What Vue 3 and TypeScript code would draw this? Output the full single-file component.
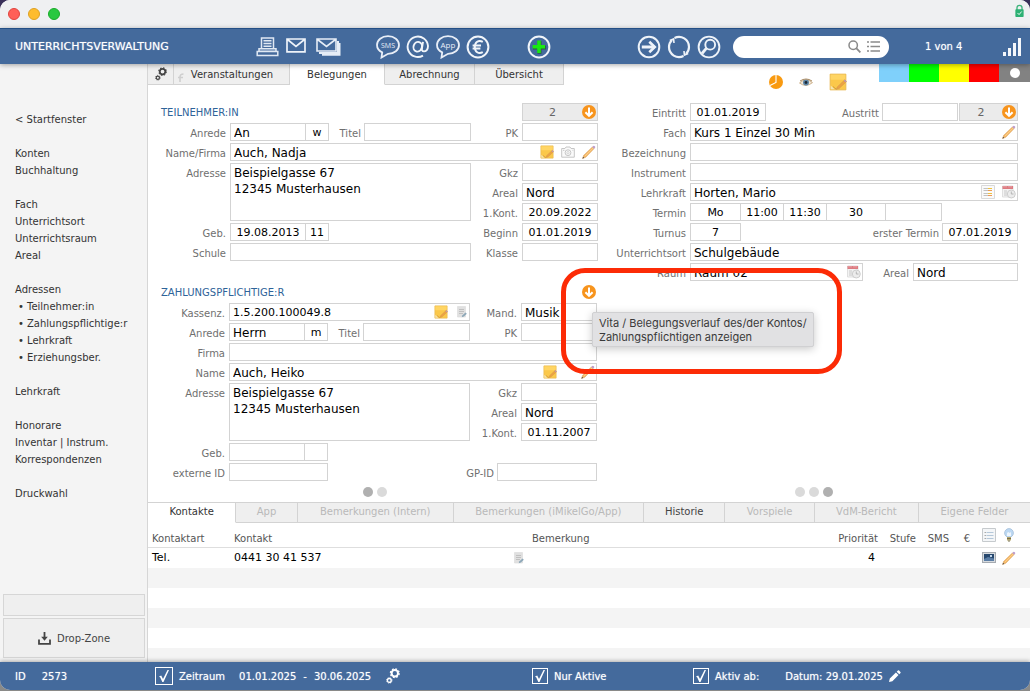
<script setup lang="ts">
import { reactive, ref } from 'vue'

interface NavItem { text: string; sub?: boolean }

const nav: NavItem[][] = [
  [{ text: '< Startfenster' }],
  [{ text: 'Konten' }, { text: 'Buchhaltung' }],
  [{ text: 'Fach' }, { text: 'Unterrichtsort' }, { text: 'Unterrichtsraum' }, { text: 'Areal' }],
  [
    { text: 'Adressen' },
    { text: 'Teilnehmer:in', sub: true },
    { text: 'Zahlungspflichtige:r', sub: true },
    { text: 'Lehrkraft', sub: true },
    { text: 'Erziehungsber.', sub: true },
  ],
  [{ text: 'Lehrkraft' }],
  [{ text: 'Honorare' }, { text: 'Inventar | Instrum.' }, { text: 'Korrespondenzen' }],
  [{ text: 'Druckwahl' }],
]

const detailTabs = [
  { text: 'Kontakte', cls: 'w-kontakte', state: 'active' },
  { text: 'App', cls: 'w-app', state: 'off' },
  { text: 'Bemerkungen (Intern)', cls: 'w-intern', state: 'off' },
  { text: 'Bemerkungen (iMikelGo/App)', cls: 'w-go', state: 'off' },
  { text: 'Historie', cls: 'w-historie', state: 'on' },
  { text: 'Vorspiele', cls: 'w-vorspiele', state: 'off' },
  { text: 'VdM-Bericht', cls: 'w-vdm', state: 'off' },
  { text: 'Eigene Felder', cls: 'w-eigene', state: 'off' },
]

const student = reactive({
  anrede: 'An', sex: 'w', titel: '', pk: '', name: 'Auch, Nadja',
  adresse: 'Beispielgasse 67\n12345 Musterhausen', gkz: '', areal: 'Nord',
  kont: '20.09.2022', geb: '19.08.2013', alter: '11', beginn: '01.01.2019', schule: '', klasse: '',
})
const payer = reactive({
  kassenz: '1.5.200.100049.8', mand: 'Musik', anrede: 'Herrn', sex: 'm', titel: '', pk: '',
  firma: '', name: 'Auch, Heiko', adresse: 'Beispielgasse 67\n12345 Musterhausen', gkz: '',
  areal: 'Nord', kont: '01.11.2007', geb: '', alter: '', extern: '', gp: '',
})
const course = reactive({
  eintritt: '01.01.2019', austritt: '', fach: 'Kurs 1 Einzel 30 Min', bezeichnung: '', instrument: '',
  lehrkraft: 'Horten, Mario', tag: 'Mo', von: '11:00', bis: '11:30', dauer: '30', extra: '',
  turnus: '7', erster: '07.01.2019', ort: 'Schulgebäude', raum: 'Raum 02', areal: 'Nord',
})
const search = ref('')
const filters = reactive({ zeitraum: true, aktive: true, aktivAb: true })
</script>

<template>
  <svg class="sprite" aria-hidden="true">
    <symbol id="i-down" viewBox="0 0 14 14">
      <circle cx="7" cy="7" r="7" fill="#f7941d" />
      <path d="M7 2.5V10.5M3.4 7.2L7 10.8L10.6 7.2" fill="none" stroke="#fff" stroke-width="2" />
    </symbol>
    <symbol id="i-note" viewBox="0 0 16 16">
      <path d="M1 1H15V15H1Z" fill="#fbc84a" stroke="#e9b850" stroke-width=".8" />
      <path d="M1.5 1.5H14.5V6H1.5Z" fill="#ffd564" />
      <path d="M1.5 11L5 14.5H1.5Z" fill="#f3e4b4" />
      <path d="M6.5 14.5L7.3 12.4L14 6L15.6 7.6L9 13.8Z" fill="#eda244" stroke="#c8934e" stroke-width=".4" />
      <path d="M14 6L15.6 7.6L14.8 8.3L13.2 6.8Z" fill="#b695c8" />
      <path d="M3.5 12L6.5 14.5" stroke="#c9953a" stroke-width=".8" />
    </symbol>
    <symbol id="i-pencil" viewBox="0 0 14 14">
      <path d="M.5 13.5L1.8 10.2L10.4 1.9L12.1 3.6L3.8 12.2Z" fill="#f4b562" stroke="#d29a58" stroke-width=".5" />
      <path d="M2.9 11.2L11.3 2.9" stroke="#ffd898" stroke-width=".8" />
      <path d="M.5 13.5L1.1 11.8L2.2 12.9Z" fill="#444" />
      <path d="M10.3 2L11.3 1Q12 .4 12.8 1.2T13.2 2.6L12 3.7Z" fill="#bd9ccb" />
    </symbol>
    <symbol id="i-camera" viewBox="0 0 14 12">
      <path d="M.7 2.5H4L5 1H9L10 2.5H13.3V11.2H.7Z" fill="#fafafa" stroke="#c6c6c6" />
      <circle cx="7" cy="6.7" r="2.9" fill="none" stroke="#c6c6c6" />
      <circle cx="7" cy="6.7" r="1.2" fill="none" stroke="#d6d6d6" />
      <path d="M2 4.3H3.4M11.5 4.3H12.3" stroke="#c6c6c6" />
    </symbol>
    <symbol id="i-doc" viewBox="0 0 10 12">
      <path d="M.5 .5H8.5V11H.5Z" fill="#e0e0e0" stroke="#dcdcdc" stroke-width=".7" />
      <path d="M2 3.5H7M2 5.5H7M2 7.5H6" stroke="#c0c0c0" />
      <path d="M4.7 11.3L5.5 9.3L8.5 6.6L9.8 7.8L6.9 10.5Z" fill="#8ca7b8" />
    </symbol>
    <symbol id="i-list" viewBox="0 0 14 14">
      <path d="M.5 .5H13.5V13.5H.5Z" fill="#fafafa" stroke="#dadada" />
      <path d="M2.5 3.5H7M2.5 5.5H7M2.5 8.5H7M2.5 10.5H7" stroke="#b4b4b4" stroke-width=".8" />
      <path d="M7 3.5H11M7 8.5H11" stroke="#f0c23c" />
      <path d="M7 5.5H11M7 10.5H11" stroke="#ee9a52" />
    </symbol>
    <symbol id="i-cal" viewBox="0 0 14 14">
      <path d="M.5 1H11V12H.5Z" fill="#f3f3f3" stroke="#d8d8d8" stroke-width=".8" />
      <path d="M.5 1H11V4H.5Z" fill="#dd7b80" />
      <path d="M2 .5V2.5M4 .5V2.5M7 .5V2.5M9 .5V2.5" stroke="#f6d5d6" stroke-width=".6" />
      <path d="M2 6H5M2 8H5M2 10H5" stroke="#c8c8c8" />
      <circle cx="9.3" cy="9" r="4" fill="#ececec" stroke="#c4c4c4" stroke-width=".8" />
      <path d="M9.3 6.5V9H11.5" fill="none" stroke="#a8a8a8" stroke-width=".8" />
    </symbol>
    <symbol id="i-gears" viewBox="0 0 14 16">
      <circle cx="8.8" cy="5.2" r="3.2" fill="none" stroke="currentColor" stroke-width="2" />
      <circle cx="8.8" cy="5.2" r="4.4" fill="none" stroke="currentColor" stroke-width="1.3" stroke-dasharray="1.8 1.65" />
      <circle cx="3.3" cy="12.4" r="1.9" fill="none" stroke="currentColor" stroke-width="1.4" />
      <circle cx="3.3" cy="12.4" r="2.8" fill="none" stroke="currentColor" stroke-width=".8" stroke-dasharray="1.1 1.1" />
    </symbol>
  </svg>

  <div class="window">
    <div class="titlebar">
      <span class="light red"></span><span class="light amber"></span><span class="light green"></span>
      <svg class="lock" viewBox="0 0 10 14" aria-hidden="true">
        <path d="M2.2 6V3.5A2.8 2.8 0 0 1 7.8 3.5V6" fill="none" stroke="#3eb37c" stroke-width="1.5" />
        <rect x=".4" y="5" width="9.2" height="8.6" rx=".8" fill="#2cb073" />
        <path d="M2.8 9.2L4.5 11L7.4 7.6" fill="none" stroke="#fff" />
      </svg>
    </div>

    <header class="toolbar">
      <h1>UNTERRICHTSVERWALTUNG</h1>
      <div class="group docs">
        <button aria-label="Drucken">
          <svg width="23" height="20" viewBox="0 0 23 20" fill="none" stroke="#dfe8f3" stroke-width="1.5">
            <path d="M5.5 12V1H17.5V12M7.5 3.8H15.5M7.5 6.5H15.5M7.5 9.2H15.5" /><path d="M3 11.7H20V14.3H3ZM1.2 14.5H21.8V18.4H1.2Z" />
          </svg>
        </button>
        <button class="up" aria-label="E-Mail">
          <svg width="20" height="15" viewBox="0 0 20 15" fill="none" stroke="#eef3f9" stroke-width="1.7">
            <path d="M1 1H19V13.8H1ZM1.5 1.5L10 8.5L18.5 1.5" />
          </svg>
        </button>
        <button aria-label="Serienmail">
          <svg width="25" height="18" viewBox="0 0 25 18" fill="none" stroke="#e6edf6" stroke-width="1.6">
            <path d="M1 1H20V13H1ZM1.5 1.5L10.5 8.5L19.5 1.5" /><path d="M3 15H22V3M6 16.8H23.5V5" stroke-width="2" />
          </svg>
        </button>
      </div>
      <div class="group talk">
        <button aria-label="SMS">
          <svg width="24" height="24" viewBox="0 0 24 24">
            <path d="M12 1.2C18.3 1.2 23 5 23 10S18.3 18.8 12 18.8L5.5 22.5L6.2 17.4C3 15.8 1 13.2 1 10C1 5 5.7 1.2 12 1.2Z" fill="none" stroke="#e8eef7" stroke-width="1.8" />
            <text x="12" y="12.5" font-family="Open Sans, sans-serif" font-size="7" fill="#e8eef7" text-anchor="middle">SMS</text>
          </svg>
        </button>
        <button aria-label="At">
          <svg width="24" height="24" viewBox="0 0 24 24" fill="none" stroke="#f1f5fa" stroke-width="1.9">
            <path d="M17 20.6A10.2 10.2 0 1 1 22 11C22 14.6 20 16.4 18 16.4S15.6 15 16 12.8L17 6.8" /><ellipse cx="11.7" cy="11.8" rx="4.2" ry="4.9" transform="rotate(18 11.7 11.8)" />
          </svg>
        </button>
        <button aria-label="App-Nachricht">
          <svg width="24" height="24" viewBox="0 0 24 24">
            <path d="M12 1.2C18.3 1.2 23 5 23 10S18.3 18.8 12 18.8L5.5 22.5L6.2 17.4C3 15.8 1 13.2 1 10C1 5 5.7 1.2 12 1.2Z" fill="none" stroke="#e8eef7" stroke-width="1.8" />
            <text x="12" y="12.5" font-family="Open Sans, sans-serif" font-size="8" fill="#e8eef7" text-anchor="middle">App</text>
          </svg>
        </button>
        <button aria-label="Euro">
          <svg width="24" height="24" viewBox="0 0 24 24" fill="none" stroke="#f1f5fa" stroke-width="2">
            <circle cx="12" cy="12" r="10.4" /><path d="M16.8 6.8C12.4 4.4 8.8 7.3 8.8 12S12.4 19.6 16.8 17.2M6.6 10.5H15M6.6 13.5H14.4" stroke-width="2" />
          </svg>
        </button>
      </div>
      <div class="group add">
        <button aria-label="Neu">
          <svg width="24" height="24" viewBox="0 0 24 24" fill="none">
            <circle cx="12" cy="12" r="10.4" stroke="#f1f5fa" stroke-width="2" /><path d="M12.5 6.2V18.8M6 12.5H18.8" stroke="#2a5a3a" stroke-width="4" /><path d="M12 5.6V18M5.6 11.8H18" stroke="#18ea12" stroke-width="3.6" />
          </svg>
        </button>
      </div>
      <div class="group find">
        <button aria-label="Weiter">
          <svg width="24" height="24" viewBox="0 0 24 24" fill="none" stroke="#eef3f9" stroke-width="2">
            <circle cx="12" cy="12" r="10.3" /><path d="M4.8 12H17" stroke-width="3" /><path d="M12.3 6.7L17.8 12L12.3 17.3" stroke-width="2.6" />
          </svg>
        </button>
        <button aria-label="Aktualisieren">
          <svg width="24" height="24" viewBox="0 0 24 24" fill="none" stroke="#eef3f9" stroke-width="2.2">
            <path d="M7.5 3A10 10 0 0 1 22 12Q22 16 19 19M16.5 21A10 10 0 0 1 2 12Q2 8 5 5" /><path d="M2.8 5.6L6.6 4L7 8M21.2 18.4L17.4 20L17 16" stroke-width="1.6" />
          </svg>
        </button>
        <button aria-label="Suchen">
          <svg width="24" height="24" viewBox="0 0 24 24" fill="none" stroke="#eef3f9" stroke-width="1.9">
            <circle cx="12" cy="12" r="10.4" /><circle cx="13.2" cy="9.7" r="4.9" /><path d="M9.5 13.2L5 18.5" stroke-width="2.8" />
          </svg>
        </button>
      </div>
      <div class="search">
        <input v-model="search" type="text" aria-label="Suche" />
        <svg width="13" height="13" viewBox="0 0 13 13" fill="none" stroke="#8a8a8a" stroke-width="1.5">
          <circle cx="5.2" cy="5.2" r="4.2" /><path d="M8.2 8.2L12.4 12.4" stroke-width="1.8" />
        </svg>
        <svg width="13" height="13" viewBox="0 0 13 13" stroke="#8a8a8a" stroke-width="1.6">
          <path d="M0 2H2M0 6.5H2M0 11H2M3.5 2H13M3.5 6.5H13M3.5 11H13" />
        </svg>
      </div>
      <span class="count">1 von 4</span>
      <svg class="signal" width="19" height="18" viewBox="0 0 19 18" fill="#f4f7fb" aria-hidden="true">
        <rect y="14" width="3" height="4" /><rect x="5" y="10" width="3" height="8" /><rect x="10" y="5" width="3" height="13" /><rect x="15" width="3" height="18" />
      </svg>
    </header>

    <div class="body">
      <aside class="sidebar">
        <nav>
          <ul v-for="(group, gi) in nav" :key="gi">
            <li v-for="item in group" :key="item.text" :class="{ sub: item.sub }"><a href="#">{{ item.text }}</a></li>
          </ul>
        </nav>
        <div class="slot"></div>
        <button class="drop">
          <svg width="13" height="13" viewBox="0 0 13 13" fill="none" stroke="#444" stroke-width="1.8">
            <path d="M1 7.5V11.8H12V7.5" /><path d="M6.5 0V6" /><path d="M3.2 4.8H9.8L6.5 8.8Z" fill="#444" stroke="none" />
          </svg>
          Drop-Zone
        </button>
      </aside>

      <main>
        <div class="tabrow">
          <button class="tab gear" aria-label="Einstellungen"><svg width="14" height="16"><use href="#i-gears" /></svg></button>
          <button class="tab t1">
            <svg class="hook" width="7" height="9" viewBox="0 0 7 9" fill="none" stroke="#cfcfcf" stroke-width="1.6"><path d="M2 9V4Q2 1 5.5 1M0 4.5H5" /></svg>
            Veranstaltungen
          </button>
          <button class="tab t2 active">Belegungen</button>
          <button class="tab t3">Abrechnung</button>
          <button class="tab t4">Übersicht</button>
          <div class="marks">
            <svg width="14" height="14" viewBox="0 0 14 14"><circle cx="7" cy="7" r="7" fill="#f99a10" /><path d="M7 0V7.5L1 10.5" fill="none" stroke="#fff" stroke-width="1.1" /></svg>
            <svg width="14" height="9" viewBox="0 0 14 9"><path d="M.5 5Q7-1 13.5 4.6Q7 10 .5 5Z" fill="#f1e7d9" stroke="#cdb28d" /><circle cx="7" cy="4.5" r="3" fill="#5d86a8" /><circle cx="7" cy="4.5" r="1.4" fill="#1b2733" /><path d="M1 3Q7-1 13 3" fill="none" stroke="#a98a62" /></svg>
            <svg width="18" height="18"><use href="#i-note" /></svg>
          </div>
          <div class="colors">
            <span class="c-blue"></span><span class="c-green"></span><span class="c-yellow"></span><span class="c-red"></span><span class="c-gray"><i></i></span>
          </div>
        </div>

        <div class="forms">
          <div class="left">
            <section class="grid">
              <h2>TEILNEHMER:IN</h2>
              <div class="badge col4"><span>2</span><button aria-label="Verlauf Teilnehmer"><svg width="14" height="14"><use href="#i-down" /></svg></button></div>

              <label for="s-anrede">Anrede</label>
              <div class="line">
                <input id="s-anrede" v-model="student.anrede" class="w76" /><input v-model="student.sex" class="w24 mid join" aria-label="Geschlecht" />
                <label for="s-titel">Titel</label><input id="s-titel" v-model="student.titel" class="w107" />
              </div>
              <label for="s-pk">PK</label><input id="s-pk" v-model="student.pk" />

              <label for="s-name">Name/Firma</label>
              <div class="box wide">
                <input id="s-name" v-model="student.name" />
                <svg width="14" height="14"><use href="#i-note" /></svg><svg width="14" height="12"><use href="#i-camera" /></svg><svg width="14" height="14"><use href="#i-pencil" /></svg>
              </div>

              <label for="s-adr">Adresse</label><textarea id="s-adr" v-model="student.adresse"></textarea>
              <label for="s-gkz">Gkz</label><input id="s-gkz" v-model="student.gkz" />
              <label for="s-areal" class="col3">Areal</label><input id="s-areal" v-model="student.areal" />
              <label for="s-kont" class="col3">1.Kont.</label><input id="s-kont" v-model="student.kont" class="num" />

              <label for="s-geb">Geb.</label>
              <div class="line"><input id="s-geb" v-model="student.geb" class="w76 num" /><input v-model="student.alter" class="w24 num join" aria-label="Alter" /></div>
              <label for="s-beginn">Beginn</label><input id="s-beginn" v-model="student.beginn" class="num" />

              <label for="s-schule">Schule</label><input id="s-schule" v-model="student.schule" />
              <label for="s-klasse">Klasse</label><input id="s-klasse" v-model="student.klasse" />
            </section>

            <section class="grid payer">
              <h2>ZAHLUNGSPFLICHTIGE:R</h2>
              <div class="badge plain col4"><button aria-label="Verlauf Zahlungspflichtige" aria-describedby="vita-tip"><svg width="14" height="14"><use href="#i-down" /></svg></button></div>

              <label for="p-kz">Kassenz.</label>
              <div class="box inset">
                <input id="p-kz" v-model="payer.kassenz" class="small" />
                <svg width="14" height="14"><use href="#i-note" /></svg><svg width="10" height="12"><use href="#i-doc" /></svg>
              </div>
              <label for="p-mand">Mand.</label><input id="p-mand" v-model="payer.mand" />

              <label for="p-anrede">Anrede</label>
              <div class="line">
                <input id="p-anrede" v-model="payer.anrede" class="w76" /><input v-model="payer.sex" class="w24 mid join" aria-label="Geschlecht" />
                <label for="p-titel">Titel</label><input id="p-titel" v-model="payer.titel" class="w107" />
              </div>
              <label for="p-pk">PK</label><input id="p-pk" v-model="payer.pk" />

              <label for="p-firma">Firma</label><input id="p-firma" v-model="payer.firma" class="wide" />

              <label for="p-name">Name</label>
              <div class="box wide spaced">
                <input id="p-name" v-model="payer.name" />
                <svg width="14" height="14"><use href="#i-note" /></svg><svg width="14" height="14"><use href="#i-pencil" /></svg>
              </div>

              <label for="p-adr">Adresse</label><textarea id="p-adr" v-model="payer.adresse"></textarea>
              <label for="p-gkz">Gkz</label><input id="p-gkz" v-model="payer.gkz" />
              <label for="p-areal" class="col3">Areal</label><input id="p-areal" v-model="payer.areal" />
              <label for="p-kont" class="col3">1.Kont.</label><input id="p-kont" v-model="payer.kont" class="num" />

              <label for="p-geb">Geb.</label>
              <div class="line wide"><input id="p-geb" v-model="payer.geb" class="w76" /><input v-model="payer.alter" class="w24 join" aria-label="Alter" /></div>

              <label for="p-ext">externe ID</label>
              <div class="line wide"><input id="p-ext" v-model="payer.extern" class="w99" /><label for="p-gp" class="push">GP-ID</label><input id="p-gp" v-model="payer.gp" class="w100" /></div>

              <div class="marker"></div>
              <div id="vita-tip" class="tooltip" role="tooltip">Vita / Belegungsverlauf des/der Kontos/<br />Zahlungspflichtigen anzeigen</div>
            </section>
            <div class="dots"><span class="cur"></span><span></span></div>
          </div>

          <div class="right">
            <section class="grid course">
              <label for="c-ein">Eintritt</label>
              <div class="line">
                <input id="c-ein" v-model="course.eintritt" class="w76 num" /><label for="c-aus" class="push">Austritt</label><input id="c-aus" v-model="course.austritt" class="w76" />
                <div class="badge w59"><span>2</span><button aria-label="Verlauf Belegung"><svg width="14" height="14"><use href="#i-down" /></svg></button></div>
              </div>
              <label for="c-fach">Fach</label>
              <div class="box"><input id="c-fach" v-model="course.fach" /><svg width="14" height="14"><use href="#i-pencil" /></svg></div>
              <label for="c-bez">Bezeichnung</label><input id="c-bez" v-model="course.bezeichnung" />
              <label for="c-ins">Instrument</label><input id="c-ins" v-model="course.instrument" />
              <label for="c-lk">Lehrkraft</label>
              <div class="box"><input id="c-lk" v-model="course.lehrkraft" /><svg width="14" height="14"><use href="#i-list" /></svg><svg width="14" height="14"><use href="#i-cal" /></svg></div>
              <label for="c-tag">Termin</label>
              <div class="line">
                <input id="c-tag" v-model="course.tag" class="w51 mid" /><input v-model="course.von" class="w44 num join" aria-label="Von" /><input v-model="course.bis" class="w44 num join" aria-label="Bis" /><input v-model="course.dauer" class="w60 mid join" aria-label="Dauer" /><input v-model="course.extra" class="w57 join" aria-label="Zusatz" />
              </div>
              <label for="c-tur">Turnus</label>
              <div class="line"><input id="c-tur" v-model="course.turnus" class="w51 mid" /><label for="c-erst" class="push">erster Termin</label><input id="c-erst" v-model="course.erster" class="w76 num" /></div>
              <label for="c-ort">Unterrichtsort</label><input id="c-ort" v-model="course.ort" />
              <label for="c-raum">Raum</label>
              <div class="line">
                <div class="box grow"><input id="c-raum" v-model="course.raum" /><svg width="14" height="14"><use href="#i-cal" /></svg></div>
                <label for="c-areal" class="w50">Areal</label><input id="c-areal" v-model="course.areal" class="w105" />
              </div>
            </section>
            <div class="dots"><span></span><span></span><span class="cur"></span></div>
          </div>
        </div>

        <div class="dtabs">
          <button v-for="t in detailTabs" :key="t.text" :class="[t.cls, t.state]">{{ t.text }}</button>
        </div>

        <div class="list">
          <table>
            <colgroup><col class="k1" /><col class="k2" /><col class="k3" /><col /><col class="k5" /><col class="k6" /><col class="k7" /><col class="k8" /><col class="k9" /><col class="k10" /></colgroup>
            <thead>
              <tr>
                <th>Kontaktart</th><th>Kontakt</th><th></th><th>Bemerkung</th><th class="r">Priorität</th><th class="r">Stufe</th><th class="r">SMS</th><th class="r">€</th>
                <th class="ic"><svg width="14" height="14" viewBox="0 0 14 14"><path d="M.5 .5H13.5V13.5H.5Z" fill="#f4f6f8" stroke="#c6cacd" /><path d="M2.5 4.5H4M2.5 7.5H4M2.5 10.5H4" stroke="#aaa" /><path d="M4.5 4.5H11.5M4.5 7.5H11.5M4.5 10.5H11.5" stroke="#b5c8d9" /></svg></th>
                <th class="ic"><svg width="12" height="14" viewBox="0 0 12 14"><circle cx="6" cy="5" r="4.4" fill="#bcd8f3" stroke="#a4bfd9" stroke-width=".8" /><path d="M4 5L5.3 4L6.7 5L8 4V8H4Z" fill="#eef6fd" /><path d="M4 9H8V12.5H4Z" fill="#b7a870" /><path d="M4 10.5H8M5 13H7" stroke="#77704d" /></svg></th>
              </tr>
            </thead>
            <tbody>
              <tr>
                <td>Tel.</td><td>0441 30 41 537</td><td><svg class="docic" width="10" height="12"><use href="#i-doc" /></svg></td><td></td><td class="r">4</td><td></td><td></td><td></td>
                <td class="ic"><svg width="14" height="11" viewBox="0 0 14 11"><rect x=".5" y=".5" width="13" height="10" fill="#d7dbdf" stroke="#a5aab0" /><rect x="2" y="2" width="10" height="7" fill="#27486e" /><path d="M2 7L6 5L12 6.5V9H2Z" fill="#5a7da5" /><rect x="8" y="3" width="2" height="2" fill="#c2d6ea" /></svg></td>
                <td class="ic"><svg width="14" height="14"><use href="#i-pencil" /></svg></td>
              </tr>
            </tbody>
          </table>
        </div>
      </main>
    </div>

    <footer>
      <div class="f-id"><span>ID</span><span>2573</span></div>
      <div class="f-range">
        <input id="f-z" v-model="filters.zeitraum" type="checkbox" class="big" /><label for="f-z">Zeitraum</label>
        <span class="range"><span>01.01.2025</span><span>-</span><span>30.06.2025</span></span>
        <button aria-label="Zeitraum einstellen"><svg width="14" height="16"><use href="#i-gears" /></svg></button>
      </div>
      <div class="f-active"><input id="f-a" v-model="filters.aktive" type="checkbox" /><label for="f-a">Nur Aktive</label></div>
      <div class="f-from">
        <input id="f-b" v-model="filters.aktivAb" type="checkbox" /><label for="f-b">Aktiv ab:</label><span class="date">Datum: 29.01.2025</span>
        <button aria-label="Datum bearbeiten"><svg width="12" height="12" viewBox="0 0 12 12" fill="#fff"><path d="M0 12L.8 8.6L6.9 2.5L9.5 5.1L3.4 11.2ZM7.7 1.7L8.9.5Q9.5 0 10.1.6L11.4 1.9Q12 2.5 11.5 3.1L10.3 4.3Z" /></svg></button>
      </div>
    </footer>
  </div>
</template>

<style>
html { background: linear-gradient(#39305a, #8a8a88 60%); height: 100%; }
body { margin: 0; }
</style>

<style scoped>
* { box-sizing: border-box; }
.sprite { position: absolute; width: 0; height: 0; }
.window {
  display: flex; flex-direction: column; min-height: calc(100vh - 1px); border-radius: 10px; overflow: hidden;
  background: #fff; font: 10px/17px "DejaVu Sans", sans-serif; color: #333;
}
button { border: 0; padding: 0; margin: 0; background: none; font: inherit; color: inherit; display: flex; align-items: center; justify-content: center; }
svg { display: block; flex: none; }
h1, h2 { margin: 0; font-weight: 400; }

.titlebar { height: 28px; flex: none; background: #eff0f2; display: flex; align-items: center; gap: 8px; padding: 0 6px 0 8px; }
.light { width: 12px; height: 12px; border-radius: 50%; border: 1px solid #e0443e; background: #ff5f57; }
.light.amber { background: #febc2e; border-color: #dea123; }
.light.green { background: #28c840; border-color: #1aab29; }
.lock { width: 9px; height: 14px; margin: 0 0 6px auto; }

.toolbar { height: 36px; flex: none; background: #446a9c; border-top: 1px solid #234f86; color: #fff; display: flex; align-items: center; position: relative; z-index: 1; box-shadow: 0 1px 5px rgba(0, 0, 0, .35); }
.toolbar h1 { font-size: 11px; width: 256px; padding-left: 15px; flex: none; text-shadow: 0 0 1px rgba(255, 255, 255, .6); }
.group { display: flex; align-items: center; flex: none; }
.docs { width: 120px; gap: 7px; }
.docs button:last-child { margin-left: 3px; }
.docs .up { margin-bottom: 3px; }
.talk { width: 151px; gap: 6px; }
.add { width: 110px; }
.find { width: 96px; gap: 6px; }
.search { flex: none; width: 156px; height: 22px; border-radius: 11px; background: #fff; display: flex; align-items: center; gap: 6px; padding: 0 9px; }
.search input { flex: 1; min-width: 0; border: 0; outline: 0; background: none; font: 11px "DejaVu Sans", sans-serif; }
.count { margin-left: 36px; text-shadow: 0 0 1px rgba(255, 255, 255, .6); }
.signal { margin-left: auto; margin-right: 8px; }

.body { flex: 1; display: flex; }
.sidebar { width: 148px; flex: none; background: #f4f4f4; border-right: 1px solid #d6d6d6; display: flex; flex-direction: column; padding: 47px 2px 4px 3px; }
.sidebar nav { flex: 1; padding-left: 12px; }
.sidebar ul { list-style: none; margin: 0 0 17px; padding: 0; }
.sidebar a { color: #333; text-decoration: none; white-space: nowrap; }
.sidebar li.sub { padding-left: 3px; }
.sidebar li.sub::before { content: "•"; display: inline-block; width: 9px; }
.slot, .drop { border: 1px solid #d6d6d6; background: #efefef; }
.slot { height: 22px; margin-bottom: 2px; }
.drop { height: 40px; gap: 6px; color: #444; }

main { flex: 1; min-width: 0; display: flex; flex-direction: column; }
.tabrow { height: 39px; display: flex; align-items: flex-start; }
.tab { height: 21px; background: #efefef; border: solid #d3d3d3; border-width: 0 1px 1px 0; color: #333; flex: none; }
.tab.active { background: #fff; border-bottom-color: #fff; }
.gear { width: 26px; color: #444; }
.gear svg { width: 12px; height: 14px; }
.t1 { width: 116px; gap: 6px; padding-right: 12px; }
.hook { margin-top: 6px; }
.t2 { width: 95px; }
.t3 { width: 90px; }
.t4 { width: 89px; }
.marks { margin-left: auto; display: flex; align-items: center; gap: 16px; padding-top: 9px; margin-right: 32px; }
.colors { display: flex; }
.colors span { width: 30px; height: 18px; display: grid; place-items: center; }
.c-blue { background: #7fd0fb; }
.c-green { background: #0f0; }
.c-yellow { background: #ff0; }
.c-red { background: #f00; }
.colors .c-gray { width: 31px; background: #828282; }
.c-gray i { width: 10px; height: 10px; border-radius: 50%; background: #fff; }

.forms { display: flex; }
.left { flex: 450 1 0; min-width: 0; }
.right { flex: 432 1 0; min-width: 0; display: flex; flex-direction: column; }
.grid { display: grid; grid-template-columns: 78px minmax(0, 1fr) 43px 76px; grid-auto-rows: 18px; gap: 2px 4px; position: relative; }
.payer { margin: 22px 1px 0 0; grid-template-columns: 77px minmax(0, 1fr) 43px 76px; }
.course { grid-template-columns: 88px minmax(0, 1fr); padding-right: 12px; }
h2 { grid-column: 1 / 4; padding-left: 13px; font-size: 10px; line-height: 19px; color: #2e6399; }
.grid label { text-align: right; color: #6f6f6f; line-height: 22px; height: 18px; white-space: nowrap; }
.col3 { grid-column: 3; }
.col4 { grid-column: 4; }
.wide { grid-column: 2 / 5; }
.grid input, .grid textarea { width: 100%; min-width: 0; border: 1px solid #d3d3d3; border-radius: 0; margin: 0; background: #fff; color: #000; font: 12px/16px "DejaVu Sans", sans-serif; padding: 1px 3px 0; height: 18px; outline: 0; }
.grid textarea { grid-row: span 3; height: 58px; resize: none; overflow: hidden; display: block; }
.grid input.num { font-size: 11px; text-align: center; padding: 1px 0 0; }
.grid input.small { font-size: 11px; }
.grid input.mid { text-align: center; font-size: 11px; }
.line { display: flex; }
.line > label { padding: 0 3px 0 0; margin-left: auto; }
.line > .join { margin-left: -1px; }
.line > .w24 { width: 24px; }
.line > .w44 { width: 44px; }
.line > .w50 { width: 50px; padding-right: 4px; flex: none; }
.line > .w51 { width: 51px; }
.line > .w57 { width: 57px; }
.line > .w60 { width: 60px; }
.line > .w76 { width: 76px; flex: none; }
.line > .w99 { width: 99px; flex: none; }
.line > .w100 { width: 100px; flex: none; }
.line > .w105 { width: 105px; flex: none; }
.line > .w107 { width: 107px; flex: none; }
.line > .w59 { width: 59px; flex: none; margin-left: 1px; }
.box { border: 1px solid #d3d3d3; display: flex; align-items: center; gap: 7px; padding-right: 1px; }
.grid .box input { border: 0; height: 16px; flex: 1; padding: 1px 3px 0; }
.box.inset { gap: 9px; padding-right: 2px; }
.box.spaced { gap: 24px; }
.grow { flex: 1; min-width: 0; }
.badge { border: 1px solid #d3d3d3; background: #ebebeb; display: flex; align-items: center; justify-content: flex-end; padding-right: 1px; color: #666; font-size: 11px; }
.badge span { flex: 1; text-align: center; }
.badge.plain { border-color: transparent; background: none; padding-right: 0; }
.dots { display: flex; justify-content: center; gap: 4px; padding: 6px 0 5px; margin-top: auto; }
.left .dots { padding-left: 3px; }
.dots span { width: 10px; height: 10px; border-radius: 50%; background: #dadada; }
.dots .cur { background: #b0b0b0; }

.marker { position: absolute; left: calc(100% - 36px); top: -15px; width: 281px; height: 106px; border: 5px solid #fc2b06; border-radius: 24px; z-index: 2; pointer-events: none; }
.tooltip { position: absolute; left: calc(100% - 5px); top: 29px; z-index: 3; background: #e1e1e3; border: 1px solid #d0d0d2; border-radius: 2px; box-shadow: 0 2px 8px rgba(0, 0, 0, .22); padding: 3px 6px 2px; font: 11px/14px Inter, sans-serif; color: #3a3a3a; white-space: nowrap; }

.dtabs { display: flex; border-top: 1px solid #d3d3d3; }
.dtabs button { height: 20px; background: #efefef; border: solid #d3d3d3; border-width: 0 1px 1px 0; min-width: 0; white-space: nowrap; color: #b9b9b9; padding-bottom: 2px; }
.dtabs .active { background: #fff; border-bottom-color: #fff; color: #333; }
.dtabs .on { color: #444; }
.dtabs button:last-child { border-right: 0; }
.w-kontakte { flex: 88 1 0; }
.w-app { flex: 61 1 0; }
.w-intern { flex: 156 1 0; }
.w-go { flex: 191 1 0; }
.w-historie { flex: 81 1 0; }
.w-vorspiele { flex: 89 1 0; }
.w-vdm { flex: 104 1 0; }
.w-eigene { flex: 112 1 0; }

.list { flex: 1; min-height: 138px; background: repeating-linear-gradient(#fff 0 20px, #f4f4f4 20px 40px) 0 25px; }
table { width: 100%; border-collapse: collapse; table-layout: fixed; background: #fff; }
th, td { padding: 0; text-align: left; font-weight: 400; white-space: nowrap; }
th { height: 24px; border-bottom: 1px solid #dedede; color: #555; vertical-align: bottom; line-height: 17px; }
td { height: 20px; font-size: 11px; line-height: 20px; color: #000; vertical-align: middle; }
th:first-child, td:first-child { padding-left: 4px; }
.r { text-align: right; }
td.r { padding-right: 3px; }
.ic { padding-left: 8px; }
.ic svg { margin: 0 auto; }
th.ic { padding-bottom: 5px; }
.ic:last-child { padding: 0 12px 0 0; }
th.ic:last-child { padding-bottom: 5px; }
.k1 { width: 86px; }
.k2 { width: 280px; }
.k3 { width: 18px; }
.k5 { width: 64px; }
.k6 { width: 38px; }
.k7 { width: 33px; }
.k8 { width: 21px; }
.k9 { width: 30px; }
.k10 { width: 30px; }

footer { height: 28px; flex: none; background: #446a9c; color: #fff; display: flex; align-items: center; position: relative; z-index: 1; box-shadow: 0 -1px 4px rgba(0, 0, 0, .3); text-shadow: 0 0 1px rgba(255, 255, 255, .6); }
footer > div { display: flex; align-items: center; flex: none; }
.f-id { width: 155px; padding-left: 15px; gap: 16px; }
.f-range { width: 377px; }
.f-active { width: 161px; }
footer label { margin-left: 6px; }
.range { display: flex; gap: 7px; margin: 0 15px 0 14px; }
.date { margin-left: 26px; }
.f-from button { margin-left: 6px; }
footer input { appearance: none; margin: 0; width: 16px; height: 16px; border: 1px solid #fff; display: grid; place-items: center; }
footer input.big { width: 18px; height: 18px; }
footer input:checked::after { content: ""; width: 10px; height: 12px; background: #fff; clip-path: polygon(0 55%, 22% 45%, 40% 75%, 85% 0, 100% 0, 45% 100%, 33% 100%, 13% 62%); }
</style>
